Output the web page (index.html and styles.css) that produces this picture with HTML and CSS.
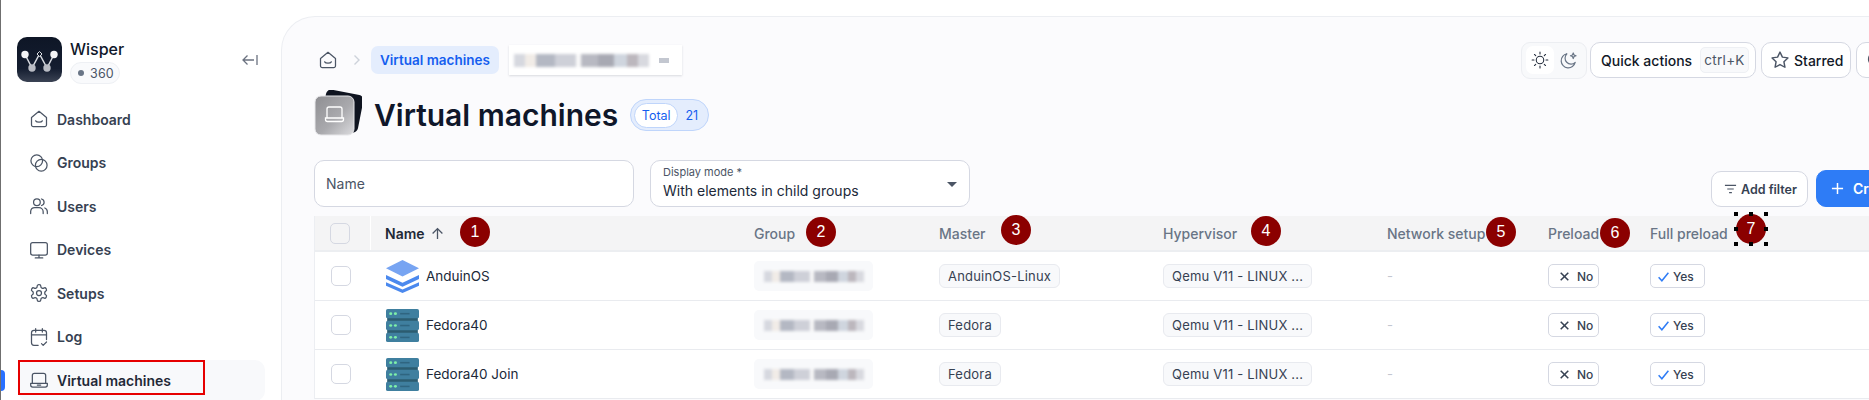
FILE: index.html
```html
<!DOCTYPE html>
<html lang="en">
<head>
<meta charset="utf-8">
<title>Virtual machines</title>
<link rel="stylesheet" href="styles.css">
</head>
<body>
<svg class="defs" aria-hidden="true">
  <symbol id="i-home" viewBox="0 0 24 24"><path d="M3 10.2 12 2.8l9 7.4V19a2.2 2.2 0 0 1-2.2 2.2H5.2A2.2 2.2 0 0 1 3 19z"/><path d="M8 14.2c1.2 2.2 6.8 2.2 8 0"/></symbol>
  <symbol id="i-groups" viewBox="0 0 24 24"><circle cx="9.3" cy="9.3" r="7"/><circle cx="14.7" cy="14.7" r="7"/></symbol>
  <symbol id="i-users" viewBox="0 0 24 24"><circle cx="9.5" cy="7.5" r="4"/><path d="M2 21v-2.5A5 5 0 0 1 7 14h5a5 5 0 0 1 5 5v2"/><path d="M15 3.6a4 4 0 0 1 0 7.8"/><path d="M19 14.4a5 5 0 0 1 3 4.6v2"/></symbol>
  <symbol id="i-monitor" viewBox="0 0 24 24"><rect x="2" y="3" width="20" height="15" rx="2.4"/><path d="M12 18v3.5M7.5 21.5h9"/></symbol>
  <symbol id="i-gear" viewBox="0 0 24 24"><path d="M12.22 2h-.44a2 2 0 0 0-2 2v.18a2 2 0 0 1-1 1.73l-.43.25a2 2 0 0 1-2 0l-.15-.08a2 2 0 0 0-2.73.73l-.22.38a2 2 0 0 0 .73 2.73l.15.1a2 2 0 0 1 1 1.72v.51a2 2 0 0 1-1 1.74l-.15.09a2 2 0 0 0-.73 2.73l.22.38a2 2 0 0 0 2.73.73l.15-.08a2 2 0 0 1 2 0l.43.25a2 2 0 0 1 1 1.73V20a2 2 0 0 0 2 2h.44a2 2 0 0 0 2-2v-.18a2 2 0 0 1 1-1.73l.43-.25a2 2 0 0 1 2 0l.15.08a2 2 0 0 0 2.73-.73l.22-.39a2 2 0 0 0-.73-2.73l-.15-.08a2 2 0 0 1-1-1.74v-.5a2 2 0 0 1 1-1.74l.15-.09a2 2 0 0 0 .73-2.73l-.22-.38a2 2 0 0 0-2.73-.73l-.15.08a2 2 0 0 1-2 0l-.43-.25a2 2 0 0 1-1-1.73V4a2 2 0 0 0-2-2z"/><circle cx="12" cy="12" r="3"/></symbol>
  <symbol id="i-cal" viewBox="0 0 24 24"><path d="M11 22H6a3 3 0 0 1-3-3V7a3 3 0 0 1 3-3h12a3 3 0 0 1 3 3v8"/><path d="M3 9.5h18M8 2v4M16 2v4"/><path d="m15 20 2 2 4-4"/></symbol>
  <symbol id="i-laptop" viewBox="0 0 24 24"><path d="M4 16V6.500A2.500 2.500 0 0 1 6.500 4h11A2.500 2.500 0 0 1 20 6.500V16"/><path d="M2 16h20v2a2.500 2.500 0 0 1-2.500 2.500h-15A2.500 2.500 0 0 1 2 18zM10 18h4"/></symbol>
  <symbol id="i-x" viewBox="0 0 24 24"><path d="M5 5l14 14M19 5 5 19"/></symbol>
  <symbol id="i-check" viewBox="0 0 24 24"><path d="M3 13.500 9 20 21 5"/></symbol>
  <symbol id="i-layers" viewBox="0 0 28 32" preserveAspectRatio="none"><path class="lay-top" d="M14 0 28 8 14 16 0 8z"/><path class="lay-low" d="M0 14.500v4L14 26l14-7.500v-4L14 22z"/><path class="lay-low" d="M0 21.500v3.500L14 32l14-7v-3.500L14 28.500z"/></symbol>
  <symbol id="i-server" viewBox="0 0 28 32" preserveAspectRatio="none"><rect class="srv-dark" x="1" y="2" width="26" height="28"/><rect class="srv-bar" x="0" y="0" width="28" height="9" rx="1.500"/><rect class="srv-bar" x="0" y="11.500" width="28" height="9" rx="1.500"/><rect class="srv-bar" x="0" y="23" width="28" height="9" rx="1.500"/><g class="srv-led"><circle cx="4" cy="4.500" r="1.300"/><circle cx="8" cy="4.500" r="1.300"/><circle cx="4" cy="16" r="1.300"/><circle cx="8" cy="16" r="1.300"/><circle cx="4" cy="27.500" r="1.300"/><circle cx="8" cy="27.500" r="1.300"/></g><g class="srv-slot"><rect x="12" y="3.800" width="8" height="1.500"/><rect x="12" y="15.300" width="8" height="1.500"/><rect x="12" y="26.800" width="8" height="1.500"/></g></symbol>
</svg>

<div class="app">
  <aside class="sidebar">
    <div class="brand">
      <svg class="logo" viewBox="0 0 45 45" aria-hidden="true">
        <defs><linearGradient id="lg" x1="0" y1="0" x2="0" y2="1"><stop offset="0" stop-color="#0e1626"/><stop offset=".7" stop-color="#141d30"/><stop offset="1" stop-color="#3b4354"/></linearGradient></defs>
        <rect width="45" height="45" rx="10" fill="url(#lg)"/>
        <path d="M8 17.500 15 31 22.500 17 30 31 37 17.500" fill="none" stroke="#d9dce2" stroke-width="1.500"/>
        <circle cx="8" cy="17.500" r="3.700" fill="#f4f4f6"/><circle cx="37" cy="17.500" r="3.700" fill="#f4f4f6"/>
        <circle cx="15" cy="31" r="3.700" fill="#b9bcc4"/><circle cx="30" cy="31" r="3.700" fill="#b9bcc4"/>
        <path d="M22.500 14.500 25 17l-2.500 2.500L20 17z" fill="#0e1626" stroke="#d9dce2"/>
      </svg>
      <div class="brand-text">
        <div class="brand-name">Wisper</div>
        <div class="brand-badge"><span class="dot"></span>360</div>
      </div>
      <svg class="collapse" viewBox="0 0 16 12" aria-hidden="true"><path d="M15 1v10M12 6H1M5.500 1.500 1 6l4.500 4.500"/></svg>
    </div>
    <nav class="nav">
      <a class="nav-item"><svg class="ic"><use href="#i-home"/></svg>Dashboard</a>
      <a class="nav-item"><svg class="ic"><use href="#i-groups"/></svg>Groups</a>
      <a class="nav-item"><svg class="ic"><use href="#i-users"/></svg>Users</a>
      <a class="nav-item"><svg class="ic"><use href="#i-monitor"/></svg>Devices</a>
      <a class="nav-item"><svg class="ic"><use href="#i-gear"/></svg>Setups</a>
      <a class="nav-item"><svg class="ic"><use href="#i-cal"/></svg>Log</a>
      <a class="nav-item active"><svg class="ic"><use href="#i-laptop"/></svg>Virtual machines<span class="marker"></span><span class="red-box"></span></a>
    </nav>
  </aside>

  <main class="panel">
    <header class="topbar">
      <div class="crumbs">
        <svg class="ic crumb-home"><use href="#i-home"/></svg>
        <svg class="crumb-sep" viewBox="0 0 8 12" aria-hidden="true"><path d="M1.500 1.500 6 6l-4.500 4.500"/></svg>
        <span class="crumb-pill">Virtual machines</span>
        <span class="crumb-blur"><span class="redact wide"></span><span class="redact dash"></span></span>
      </div>
      <div class="actions">
        <div class="theme">
          <span class="theme-on"><svg class="sun" viewBox="0 0 24 24" aria-hidden="true"><circle cx="12" cy="12" r="5"/><path d="M12 1.500v2.500M12 20v2.500M1.500 12H4M20 12h2.500M4.600 4.600l1.700 1.700M17.700 17.700l1.700 1.700M4.600 19.400l1.700-1.700M17.700 6.300l1.700-1.700"/></svg></span>
          <svg class="moon" viewBox="0 0 24 24" aria-hidden="true"><path d="M20.500 14.500A9 9 0 1 1 10 3.500a7 7 0 0 0 10.500 11z"/><path d="M18 2.500l1 2.500 2.500 1-2.500 1-1 2.500-1-2.500-2.500-1 2.500-1z"/></svg>
        </div>
        <button class="btn quick">Quick actions<kbd>ctrl+K</kbd></button>
        <button class="btn starred"><svg class="ic star" viewBox="0 0 24 24" aria-hidden="true"><path d="m12 2.500 2.900 6.100 6.600.9-4.800 4.600 1.200 6.600L12 17.500l-5.900 3.200 1.200-6.600L2.500 9.500l6.600-.9z"/></svg>Starred</button>
        <button class="btn search"><svg class="ic" viewBox="0 0 24 24" aria-hidden="true"><circle cx="11" cy="11" r="8"/><path d="m21 21-4-4"/></svg></button>
      </div>
    </header>

    <div class="title-row">
      <svg class="title-icon" viewBox="0 0 48 46" aria-hidden="true">
        <defs><linearGradient id="tg" x1="0" y1="0" x2="1" y2="1"><stop offset="0" stop-color="#8e8e92"/><stop offset=".55" stop-color="#a9a9ad"/><stop offset="1" stop-color="#dcdcdf"/></linearGradient></defs>
        <rect x="9" y="2" width="38" height="38" rx="5" fill="#0f1420" transform="rotate(11 28 21)"/>
        <rect x="1" y="6" width="39" height="39" rx="6" fill="url(#tg)" stroke="#e6e6e9"/>
        <g fill="none" stroke="#fff" stroke-width="1.300"><path d="M13 28v-9a2 2 0 0 1 2-2h11a2 2 0 0 1 2 2v9"/><path d="M11.500 28h18v1.500a2 2 0 0 1-2 2h-14a2 2 0 0 1-2-2z"/></g>
      </svg>
      <h1>Virtual machines</h1>
      <div class="total"><span class="total-label">Total</span><span class="total-num">21</span></div>
    </div>

    <div class="filters">
      <label class="field name-field">Name</label>
      <div class="field select-field">
        <span class="select-label">Display mode *</span>
        <span class="select-value">With elements in child groups</span>
        <span class="caret"></span>
      </div>
      <div class="filter-actions">
        <button class="btn add-filter"><svg class="filter-ic" viewBox="0 0 14 10" aria-hidden="true"><path d="M1 1h12M3.500 5h7M5.500 9h3"/></svg>Add filter</button>
        <button class="btn create"><svg class="plus" viewBox="0 0 14 14" aria-hidden="true"><path d="M7 1v12M1 7h12"/></svg>Create</button>
      </div>
    </div>

    <section class="table">
      <div class="row head">
        <div class="cell c-check"><span class="box head-box"></span></div>
        <div class="cell c-name th-strong">Name <svg class="sort" viewBox="0 0 12 12" aria-hidden="true"><path d="M6 11V1.500M1.500 6 6 1.500 10.500 6"/></svg></div>
        <div class="cell c-group">Group</div>
        <div class="cell c-master">Master</div>
        <div class="cell c-hyper">Hypervisor</div>
        <div class="cell c-net">Network setup</div>
        <div class="cell c-pre">Preload</div>
        <div class="cell c-full">Full preload</div>
      </div>

      <div class="row">
        <div class="cell c-check"><span class="box"></span></div>
        <div class="cell c-name"><svg class="os"><use href="#i-layers"/></svg>AnduinOS</div>
        <div class="cell c-group"><span class="group-chip"><span class="redact"></span></span></div>
        <div class="cell c-master"><span class="tag">AnduinOS-Linux</span></div>
        <div class="cell c-hyper"><span class="tag hyper-tag">Qemu V11 - LINUX ...</span></div>
        <div class="cell c-net"><span class="none">-</span></div>
        <div class="cell c-pre"><span class="bool no"><svg class="b-ic"><use href="#i-x"/></svg>No</span></div>
        <div class="cell c-full"><span class="bool yes"><svg class="b-ic"><use href="#i-check"/></svg>Yes</span></div>
      </div>

      <div class="row">
        <div class="cell c-check"><span class="box"></span></div>
        <div class="cell c-name"><svg class="os"><use href="#i-server"/></svg>Fedora40</div>
        <div class="cell c-group"><span class="group-chip"><span class="redact"></span></span></div>
        <div class="cell c-master"><span class="tag">Fedora</span></div>
        <div class="cell c-hyper"><span class="tag hyper-tag">Qemu V11 - LINUX ...</span></div>
        <div class="cell c-net"><span class="none">-</span></div>
        <div class="cell c-pre"><span class="bool no"><svg class="b-ic"><use href="#i-x"/></svg>No</span></div>
        <div class="cell c-full"><span class="bool yes"><svg class="b-ic"><use href="#i-check"/></svg>Yes</span></div>
      </div>

      <div class="row">
        <div class="cell c-check"><span class="box"></span></div>
        <div class="cell c-name"><svg class="os"><use href="#i-server"/></svg>Fedora40 Join</div>
        <div class="cell c-group"><span class="group-chip"><span class="redact"></span></span></div>
        <div class="cell c-master"><span class="tag">Fedora</span></div>
        <div class="cell c-hyper"><span class="tag hyper-tag">Qemu V11 - LINUX ...</span></div>
        <div class="cell c-net"><span class="none">-</span></div>
        <div class="cell c-pre"><span class="bool no"><svg class="b-ic"><use href="#i-x"/></svg>No</span></div>
        <div class="cell c-full"><span class="bool yes"><svg class="b-ic"><use href="#i-check"/></svg>Yes</span></div>
      </div>
    </section>
  </main>
</div>

<span class="callout n1">1</span>
<span class="callout n2">2</span>
<span class="callout n3">3</span>
<span class="callout n4">4</span>
<span class="callout n5">5</span>
<span class="callout n6">6</span>
<span class="callout n7">7</span>
<span class="handles"><i class="h tl"></i><i class="h tc"></i><i class="h tr"></i><i class="h ml"></i><i class="h mr"></i><i class="h bl"></i><i class="h bc"></i><i class="h br"></i></span>
</body>
</html>
```
FILE: styles.css
```css
* { box-sizing: border-box; }
html, body { margin: 0; height: 400px; overflow: hidden; }
body {
  position: relative;
  width: 1869px;
  background: #fff;
  font-family: Inter, "Liberation Sans", sans-serif;
  color: #111827;
}
button { font: inherit; color: inherit; cursor: pointer; }
.defs { position: absolute; width: 0; height: 0; }
.app { display: flex; width: 1960px; height: 400px; }

/* sidebar */
.sidebar {
  position: relative;
  flex: 0 0 281px;
  padding: 37px 16px 0 16px;
  border-left: 1px solid #6f6f6f;
}
.brand { display: flex; align-items: flex-start; height: 45px; }
.logo { width: 45px; height: 45px; flex: none; }
.brand-text { margin-left: 8px; }
.brand-name { font-size: 16px; line-height: 22px; font-weight: 500; color: #0f172a; padding-top: 1px; }
.brand-badge {
  display: flex; align-items: center; gap: 6px;
  width: 50px; height: 22px; margin-top: 2px; padding-left: 7px;
  border: 1px solid #eef0f4; border-radius: 11px; background: #f9fafc;
  font-size: 12.500px; color: #4b5565; letter-spacing: .2px;
}
.dot { width: 6px; height: 6px; border-radius: 50%; background: #697586; }
.collapse { width: 16px; height: 12px; margin: 17px 7px 0 auto; fill: none; stroke: #6b7280; stroke-width: 1.300; }
.nav { display: flex; flex-direction: column; gap: 2.500px; margin: 16.500px 0 0 1px; }
.nav-item {
  position: relative;
  display: flex; align-items: center; gap: 8px;
  height: 41px; padding-left: 11px;
  border-radius: 10px;
  font-size: 14px; font-weight: 600; color: #364152;
}
.nav-item.active { background: #f8f9fb; color: #1f2937; }
.ic { width: 20px; height: 20px; flex: none; fill: none; stroke: #4b5565; stroke-width: 1.500; stroke-linecap: round; stroke-linejoin: round; }
.marker { position: absolute; left: -17px; top: 10px; width: 4px; height: 21px; background: #2970ff; border-radius: 0 4px 4px 0; }
.red-box { position: absolute; left: 0; top: 0; width: 187px; height: 35px; border: 2px solid #e60000; }

/* panel */
.panel {
  flex: 0 0 1672px;
  margin-top: 16px;
  padding: 25px 7px 0 32px;
  background: #fbfbfd;
  border-left: 1px solid #eceef2;
  border-top: 1px solid #eceef2;
  border-top-left-radius: 34px;
  min-height: 400px;
}
.topbar { display: flex; justify-content: space-between; align-items: center; height: 36px; }
.crumbs { display: flex; align-items: center; margin-left: 4px; }
.crumb-sep { width: 8px; height: 12px; margin: 0 10px 0 15px; fill: none; stroke: #cdd2da; stroke-width: 1.400; }
.crumb-pill {
  display: flex; align-items: center; height: 28px; padding: 0 9px;
  background: #e4edfd; border-radius: 7px;
  font-size: 13.500px; font-weight: 600; color: #155eef;
}
.crumb-blur {
  display: flex; align-items: center; gap: 10px;
  width: 173px; height: 30px; margin-left: 10px; padding-left: 5px;
  background: #fff; box-shadow: 0 1px 2px rgba(60,70,90,.18);
}

.redact {
  display: block; width: 100px; height: 11px;
  background: linear-gradient(90deg, #d6d8df 0 8%, #f1ece7 8% 16%, #b4b8c3 16% 30%, #ced0d8 30% 46%, #fafafa 46% 50%, #b8b9c2 50% 62%, #a8a9b3 62% 74%, #cfd5de 74% 84%, #bcb7bd 84% 92%, #d8d9df 92%);
  filter: blur(1.500px);
}
.redact.wide { width: 135px; height: 13px; }
.redact.dash { width: 10px; height: 5px; background: #c3c7d0; filter: none; }

.actions { display: flex; align-items: center; gap: 5px; }
.theme {
  display: flex; align-items: center; gap: 5px;
  width: 66px; height: 37px; margin-right: -2px; padding: 4px;
  background: #f8f9fb; border: 1px solid #eceef2; border-radius: 9px;
}
.theme-on { display: flex; align-items: center; justify-content: center; width: 28px; height: 28px; background: #fff; border-radius: 7px; }
.sun { width: 18px; height: 18px; fill: none; stroke: #202939; stroke-width: 1.400; stroke-linecap: round; }
.moon { width: 19px; height: 19px; fill: none; stroke: #697586; stroke-width: 1.500; stroke-linejoin: round; }
.btn {
  display: inline-flex; align-items: center;
  background: #fff; border: 1px solid #d5d8e2; border-radius: 10px;
  font-size: 14px; font-weight: 500; color: #111827;
}
.quick { justify-content: space-between; width: 166px; height: 36px; padding: 0 6px 0 10px; }
kbd {
  display: flex; align-items: center; justify-content: center;
  width: 49px; height: 26px;
  background: #f8f9fb; border: 1px solid #eef0f4; border-radius: 5px;
  font-family: inherit; font-size: 13.500px; font-weight: 400; letter-spacing: .3px; color: #4b5565;
}
.starred { gap: 4px; width: 90px; height: 36px; padding-left: 8px; }
.star { stroke: #4b5565; stroke-width: 1.700; }
.search { width: 90px; height: 36px; padding-left: 9px; }

.title-row { display: flex; align-items: center; height: 46px; margin-top: 12px; }
.title-icon { width: 48px; height: 46px; flex: none; }
h1 { margin: 4px 0 0 12px; font-size: 30px; line-height: 46px; font-weight: 600; color: #0f172a; }
.total {
  display: flex; align-items: center;
  width: 79px; height: 32px; margin: 4px 0 0 12px; padding: 3px;
  background: #e4edfd; border: 1px solid #bfd5fb; border-radius: 16px;
  font-size: 12.500px; color: #155eef;
}
.total-label {
  display: flex; align-items: center; justify-content: center;
  width: 44px; height: 25px;
  background: #fff; border: 1px solid #bfd5fb; border-radius: 13px;
}
.total-num { flex: 1; text-align: center; }

.filters { display: flex; align-items: flex-end; gap: 16px; margin-top: 24px; height: 47px; }
.field { height: 47px; width: 320px; background: #fff; border: 1px solid #d5d8e2; border-radius: 10px; }
.name-field { display: flex; align-items: center; padding-left: 11px; font-size: 14px; color: #4b5565; }
.select-field { position: relative; display: flex; flex-direction: column; padding: 3px 0 0 12px; }
.select-label { font-size: 11px; line-height: 16px; color: #4b5565; }
.select-value { font-size: 14px; line-height: 22px; color: #202939; }
.caret { position: absolute; right: 12px; top: 21px; border: 5px solid transparent; border-top-color: #4b5565; border-bottom: 0; }
.filter-actions { display: flex; align-items: flex-end; gap: 8px; margin-left: 725px; }
.add-filter { gap: 4px; width: 97px; height: 36px; padding-left: 12px; font-size: 12.500px; font-weight: 600; color: #364152; }
.filter-ic { width: 13px; height: 10px; fill: none; stroke: #4b5565; stroke-width: 1.300; }
.create { gap: 9px; width: 120px; height: 37px; padding-left: 14px; background: #2e7cf6; border-color: #2e7cf6; color: #fff; font-weight: 600; }
.plus { width: 13px; height: 13px; fill: none; stroke: #fff; stroke-width: 1.600; }

/* table */
.table { margin: 9px -40px 0 0; border-left: 1px solid #eceef2; }
.row {
  display: grid;
  grid-template-columns: 56px 383px 185px 224px 224px 161px 102px 1fr;
  height: 49px;
  background: #fff;
  border-bottom: 1px solid #e9ebef;
}
.row.head { height: 36px; background: #f4f4f5; border-bottom: 2px solid #eceef1; }
.row.head .c-check { border-right: 1px solid #fff; height: 34px; }
.cell { display: flex; align-items: center; font-size: 13.500px; color: #202939; white-space: nowrap; min-width: 0; }
.head .cell { font-size: 14px; font-weight: 500; color: #697586; }
.c-check { padding-left: 16px; }
.c-name { padding-left: 15px; }
.head .th-strong { color: #1f2937; font-weight: 600; gap: 6px; padding-left: 14px; }
.sort { width: 13px; height: 13px; fill: none; stroke: #4b5565; stroke-width: 1.200; }
.box { display: block; width: 20px; height: 20px; background: #fff; border: 1px solid #d5d8e2; border-radius: 5px; }
.head-box { background: #f4f4f5; height: 21px; margin-left: -1px; }
.os { width: 33px; height: 33px; margin-right: 7px; flex: none; }
.lay-top { fill: #77a4f2; }
.lay-low { fill: #4b89ee; }
.srv-dark { fill: #2c5c70; }
.srv-bar { fill: #3f7f9f; }
.srv-led { fill: #7ef0a9; }
.srv-slot { fill: #2f6580; }
.group-chip { display: flex; align-items: center; justify-content: center; width: 119px; height: 30px; background: #f8f9fb; border-radius: 5px; }
.tag {
  display: inline-flex; align-items: center; height: 24px; padding: 0 8px;
  background: #f8f9fb; border: 1px solid #e8eaef; border-radius: 6px;
  font-size: 13px; color: #364152; letter-spacing: .2px;
}
.hyper-tag { width: 149px; }
.none { color: #c3c7d0; font-size: 13px; }
.bool {
  display: inline-flex; align-items: center; height: 24px;
  background: #fff; border: 1px solid #d5d8e2; border-radius: 5px;
  font-size: 12px; font-weight: 500; color: #364152;
}
.no { width: 51px; gap: 6px; padding-left: 9px; }
.yes { width: 55px; gap: 3px; padding-left: 6px; }
.b-ic { width: 13px; height: 13px; fill: none; stroke-width: 2.800; }
.no .b-ic { stroke: #364152; }
.yes .b-ic { stroke: #2e7cf6; }

/* numbered call-outs drawn over the screenshot */
.callout {
  position: absolute;
  display: flex; align-items: center; justify-content: center;
  width: 30px; height: 30px; border-radius: 50%;
  background: #8b0000; color: #fff;
  font-family: "Liberation Sans", sans-serif; font-size: 16px;
}
.n1 { left: 460px; top: 217px; }
.n2 { left: 806px; top: 217px; }
.n3 { left: 1001px; top: 215px; }
.n4 { left: 1251px; top: 216px; }
.n5 { left: 1486px; top: 217px; }
.n6 { left: 1600px; top: 218px; }
.n7 { left: 1736px; top: 214px; }
.handles { position: absolute; left: 1736px; top: 214px; width: 30px; height: 30px; }
.h { position: absolute; width: 4px; height: 4px; background: #000; }
.tl { left: -2px; top: -2px; }
.tc { left: 13px; top: -2px; }
.tr { right: -2px; top: -2px; }
.ml { left: -2px; top: 13px; }
.mr { right: -2px; top: 13px; }
.bl { left: -2px; bottom: -2px; }
.bc { left: 13px; bottom: -2px; }
.br { right: -2px; bottom: -2px; }
```
